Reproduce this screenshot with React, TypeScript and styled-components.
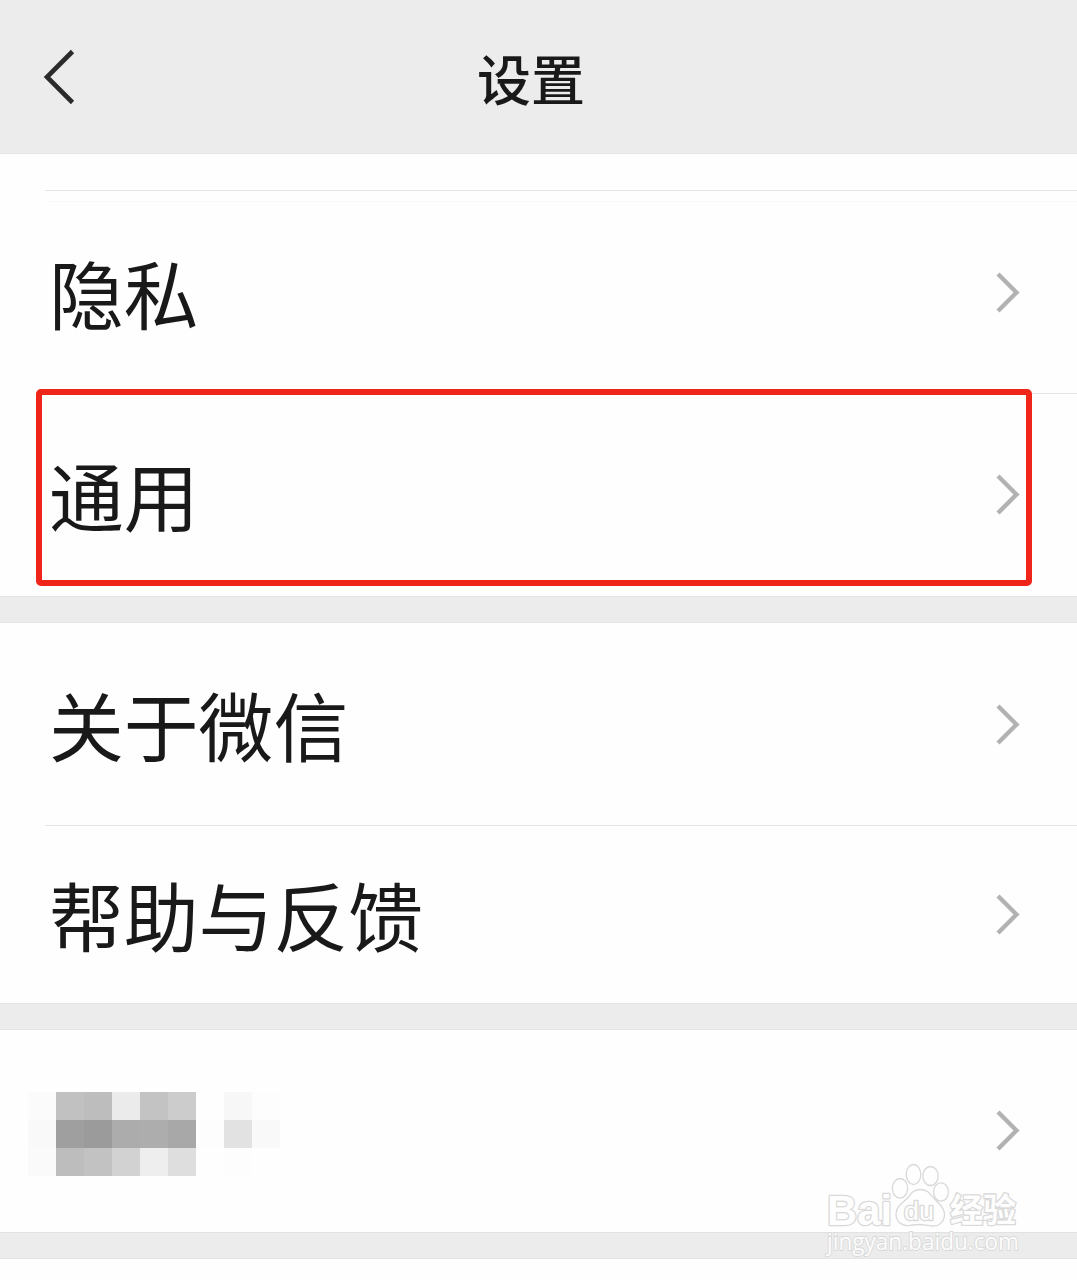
import React from 'react';

import styled, { createGlobalStyle } from 'styled-components';

const colors = {
  band: '#ececec',
  line: '#e3e3e3',
  ink: '#191919',
  chevron: '#b2b2b2',
  highlight: '#f0251a',
};

const GlobalStyle = createGlobalStyle`
  * {
    box-sizing: border-box;
  }

  body {
    margin: 0;
    background-color: #fefefe;
    font-family: 'Noto Sans CJK SC', sans-serif;
    color: ${colors.ink};
  }
`;

const Page = styled.main`
  position: relative;
  width: 1077px;
  height: 1280px;
  overflow: hidden;
  background-color: #fefefe;
`;

const Header = styled.header`
  display: grid;
  grid-template-columns: 120px 1fr 135px;
  align-items: center;
  height: 154px;
  border-bottom: 1px solid #e6e6e6;
  background-color: ${colors.band};
`;

const BackButton = styled.button`
  display: flex;
  padding: 0 0 0 42px;
  border: 0;
  background: none;
`;

const Title = styled.h1`
  margin: 0;
  padding-top: 2px;
  font-size: 54px;
  font-weight: 500;
  line-height: 80px;
  text-align: center;
`;

const PreviousRow = styled.div`
  height: 37px;
  padding-left: 45px;
  display: flex;
  align-items: flex-end;
`;

const Divider = styled.hr`
  width: 100%;
  height: 1px;
  margin: 0;
  border: 0;
  background-color: ${colors.line};
  box-shadow: 0 11px #f9f9f9;
`;

const List = styled.ul`
  margin: 0;
  padding: 0;
  list-style: none;
`;

const Row = styled.li<{ $height: number; $divided?: boolean }>`
  position: relative;
  display: flex;
  align-items: center;
  justify-content: space-between;
  height: ${(props) => props.$height}px;
  padding: 0 54px 0 49px;

  ${({ $divided }) => {
    return $divided
      ? `
      background: linear-gradient(${colors.line}, ${colors.line}) 45px 100% / 100% 1px no-repeat;
    `
      : '';
  }}
`;

const Label = styled.span`
  margin-top: -2px;
  font-size: 74.8px;
  line-height: 100px;
`;

const Gap = styled.div`
  height: 27px;
  border-top: 1px solid #e2e2e2;
  border-bottom: 1px solid #e4e4e4;
  background-color: ${colors.band};
`;

const Highlight = styled.div`
  position: absolute;
  top: -5px;
  left: 36px;
  width: 996px;
  height: 197px;
  border: 6px solid ${colors.highlight};
  border-radius: 5px;
`;

const Mosaic = styled.div`
  display: grid;
  grid-template-columns: repeat(9, 28px);
  grid-auto-rows: 28px;
  margin: 5px 0 0 -21px;
`;

const Cell = styled.span<{ $shade: string }>`
  background-color: ${(props) => props.$shade};
`;

const Watermark = styled.svg`
  position: absolute;
  left: 816px;
  top: 1156px;
  opacity: 0.99;
`;

const shades = [
  '#fbfbfb', '#c1c1c1', '#bdbdbd', '#ebebeb', '#c3c3c3', '#cccccc', '#fefefe', '#f7f7f7', '#fdfdfd',
  '#f9f9f9', '#9f9f9f', '#9b9b9b', '#acacac', '#adadad', '#a8a8a8', '#fdfdfd', '#e2e2e2', '#f9f9f9',
  '#fafafa', '#bdbdbd', '#c2c2c2', '#d2d2d2', '#eeeeee', '#dedede', '#fefefe', '#fdfdfd', '#fefefe',
];

const Chevron = () => {
  return (
    <svg width="28" height="44" viewBox="0 0 28 44" fill="none">
      <path
        d="M3 3L21.5 21.5L3 40"
        stroke={colors.chevron}
        strokeWidth="4.4"
      />
    </svg>
  );
};

const BaiduWatermark = () => {
  return (
    <Watermark width="215" height="106" viewBox="0 0 215 106">
      <g
        fill="#fefefe"
        stroke="#d9d9d9"
        strokeWidth="1.3"
        strokeLinejoin="round"
      >
        <ellipse cx="84" cy="32.3" rx="7.7" ry="9.8" />
        <ellipse cx="97.5" cy="18.5" rx="7.3" ry="10" />
        <ellipse cx="114.5" cy="20" rx="7.7" ry="9.5" />
        <ellipse cx="125" cy="36" rx="7.5" ry="9.2" />
        <path d="M104 33.5C96 33.5 94 40 90 43.5C85 48 80 51 80 58C80 66 86 70 93 69.5C98 69 100 68.5 104 68.5C109 68.5 111 70 117 70C124 70 128.5 65 128.5 58C128.5 51 122 47 118 42.5C114 38 112 33.5 104 33.5Z" />
        <g paintOrder="stroke" strokeWidth="2.6">
          <text
            x="11"
            y="68.5"
            fontFamily="Liberation Sans"
            fontSize="43"
            fontWeight="700"
            textLength="65"
            lengthAdjust="spacingAndGlyphs"
          >
            Bai
          </text>
          <text
            x="88"
            y="64"
            fontFamily="Liberation Sans"
            fontSize="25.5"
            fontWeight="400"
            textLength="30"
            lengthAdjust="spacingAndGlyphs"
          >
            du
          </text>
          <text
            x="134"
            y="66"
            fontFamily="Noto Sans CJK SC"
            fontSize="33"
            fontWeight="700"
          >
            经验
          </text>
        </g>
      </g>
      <text
        x="11"
        y="94"
        fontFamily="Open Sans"
        fontSize="23"
        fontWeight="500"
        fill="#fefefe"
        stroke="#d8d8d8"
        strokeWidth="1.8"
        paintOrder="stroke"
        textLength="192"
        lengthAdjust="spacingAndGlyphs"
      >
        jingyan.baidu.com
      </text>
    </Watermark>
  );
};

export default function App() {
  return (
    <Page>
      <GlobalStyle />
      <Header>
        <BackButton aria-label="返回">
          <svg width="34" height="56" viewBox="0 0 34 56" fill="none">
            <path d="M30.5 2.5L5 28L30.5 53.5" stroke="#2b2b2b" strokeWidth="4.6" />
          </svg>
        </BackButton>
        <Title>设置</Title>
      </Header>
      <PreviousRow>
        <Divider />
      </PreviousRow>
      <List>
        <Row $height={203} $divided>
          <Label>隐私</Label>
          <Chevron />
        </Row>
        <Row $height={202}>
          <Label>通用</Label>
          <Chevron />
          <Highlight />
        </Row>
      </List>
      <Gap />
      <List>
        <Row $height={203} $divided>
          <Label>关于微信</Label>
          <Chevron />
        </Row>
        <Row $height={177}>
          <Label>帮助与反馈</Label>
          <Chevron />
        </Row>
      </List>
      <Gap />
      <List>
        <Row $height={202}>
          <Mosaic>
            {shades.map((shade, index) => {
              return <Cell key={index} $shade={shade} />;
            })}
          </Mosaic>
          <Chevron />
        </Row>
      </List>
      <Gap />
      <BaiduWatermark />
    </Page>
  );
}
